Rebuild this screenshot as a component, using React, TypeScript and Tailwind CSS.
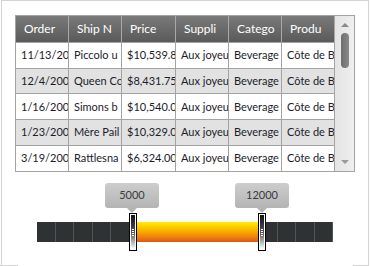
import React from "react";

const columns = ["Order", "Ship N", "Price", "Suppli", "Catego", "Produ"];

// visible portions of the clipped cells
const rows = [
  ["11/13/20", "Piccolo u", "$10,539.8", "Aux joyeu", "Beverage", "Côte de B"],
  ["12/4/200", "Queen Co", "$8,431.75", "Aux joyeu", "Beverage", "Côte de B"],
  ["1/16/200", "Simons b", "$10,540.0", "Aux joyeu", "Beverage", "Côte de B"],
  ["1/23/200", "Mère Pail", "$10,329.0", "Aux joyeu", "Beverage", "Côte de B"],
  ["3/19/200", "Rattlesna", "$6,324.00", "Aux joyeu", "Beverage", "Côte de B"],
];

const widths = ["w-[53px]", "w-[53px]", "w-[54px]", "w-[53px]", "w-[53px]", "w-[53px]"];

const Thumb = () => (
  <div className="flex h-[38px] w-[8px] border border-black bg-white p-[1px]">
    <div className="flex flex-1 flex-col items-center justify-center gap-[1px] bg-gradient-to-b from-[#111] via-[#555] to-white">
      <span className="h-[1px] w-[2px] bg-white" />
      <span className="h-[1px] w-[2px] bg-white" />
      <span className="h-[1px] w-[2px] bg-white" />
      <span className="h-[1px] w-[2px] bg-white" />
    </div>
  </div>
);

const Tip = ({ value }: { value: string }) => (
  <div className="flex flex-col items-center">
    <div className="flex h-[25px] w-[54px] items-center justify-center rounded-[3px] bg-gradient-to-b from-[#cdcdcd] to-[#b4b4b4] text-[11px] text-[#3a3a3a]">
      {value}
    </div>
    <div className="h-0 w-0 border-x-[5px] border-t-[5px] border-x-transparent border-t-[#b4b4b4]" />
  </div>
);

const App = () => {
  return (
    <div
      className="flex h-[266px] w-[370px] flex-col bg-white"
      style={{ fontFamily: 'Lato, "Open Sans", sans-serif' }}
    >
      <div className="ml-[1px] flex h-[265px] w-[368px] flex-col border-x border-t border-[#d4d4d4] pl-[13px] pt-[14px]">
        {/* grid */}
        <div className="flex h-[157px] w-[340px] border border-[#a3a3a3]">
          <div className="flex flex-col">
            <div className="flex h-[26px] bg-gradient-to-b from-[#7a7a7a] to-[#5a5a5a] text-[12px] text-white">
              {columns.map((c, i) => (
                <div
                  key={c}
                  className={`${widths[i]} flex items-center overflow-hidden whitespace-nowrap border-r border-[#a8a8a8] pl-[8px]`}
                >
                  {c}
                </div>
              ))}
            </div>
            {rows.map((r, ri) => (
              <div
                key={ri}
                className={`flex h-[26px] text-[11px] text-[#1c1c2c] ${ri % 2 === 1 ? "bg-[#e2e2e2]" : "bg-white"}`}
              >
                {r.map((v, ci) => (
                  <div
                    key={ci}
                    className={`${widths[ci]} flex items-center overflow-hidden whitespace-nowrap border-r border-t border-[#a3a3a3] pl-[5px]`}
                  >
                    {v}
                  </div>
                ))}
              </div>
            ))}
          </div>
          {/* scrollbar */}
          <div className="flex w-[20px] flex-col items-center bg-gradient-to-r from-[#e4e4e4] to-[#efefef] pt-[7px] pb-[7px]">
            <div className="h-0 w-0 border-x-[4px] border-b-[4px] border-x-transparent border-b-[#8a8a8a]" />
            <div className="mt-[6px] h-[35px] w-[8px] rounded-[4px] bg-gradient-to-r from-[#6e6e6e] to-[#8a8a8a]" />
            <div className="flex-1" />
            <div className="h-0 w-0 border-x-[4px] border-t-[4px] border-x-transparent border-t-[#9a9a9a]" />
          </div>
        </div>

        {/* slider */}
        <div className="relative mt-[11px] h-[70px] w-[340px]">
          <div className="absolute left-[90px] top-0 w-[54px]">
            <Tip value="5000" />
          </div>
          <div className="absolute left-[220px] top-0 w-[54px]">
            <Tip value="12000" />
          </div>
          <div className="absolute left-[22px] top-[39px] flex h-[20px] w-[296px] bg-[#2f3232]">
            {Array.from({ length: 16 }).map((_, i) => (
              <div key={i} className="h-full w-[18.5px] border-r border-[#4e5757]" />
            ))}
          </div>
          <div className="absolute left-[122px] top-[39px] h-[20px] w-[121px] bg-gradient-to-b from-[#ffee00] via-[#f8a800] to-[#e05512]" />
          <div className="absolute left-[114px] top-[30px]">
            <Thumb />
          </div>
          <div className="absolute left-[243px] top-[30px]">
            <Thumb />
          </div>
        </div>
      </div>
      <div className="flex h-[1px] w-[370px] justify-between">
        <div className="w-[18px] bg-[#d4d4d4]" />
        <div className="mr-[1px] w-[16px] bg-[#d4d4d4]" />
      </div>
    </div>
  );
};

export default App;
